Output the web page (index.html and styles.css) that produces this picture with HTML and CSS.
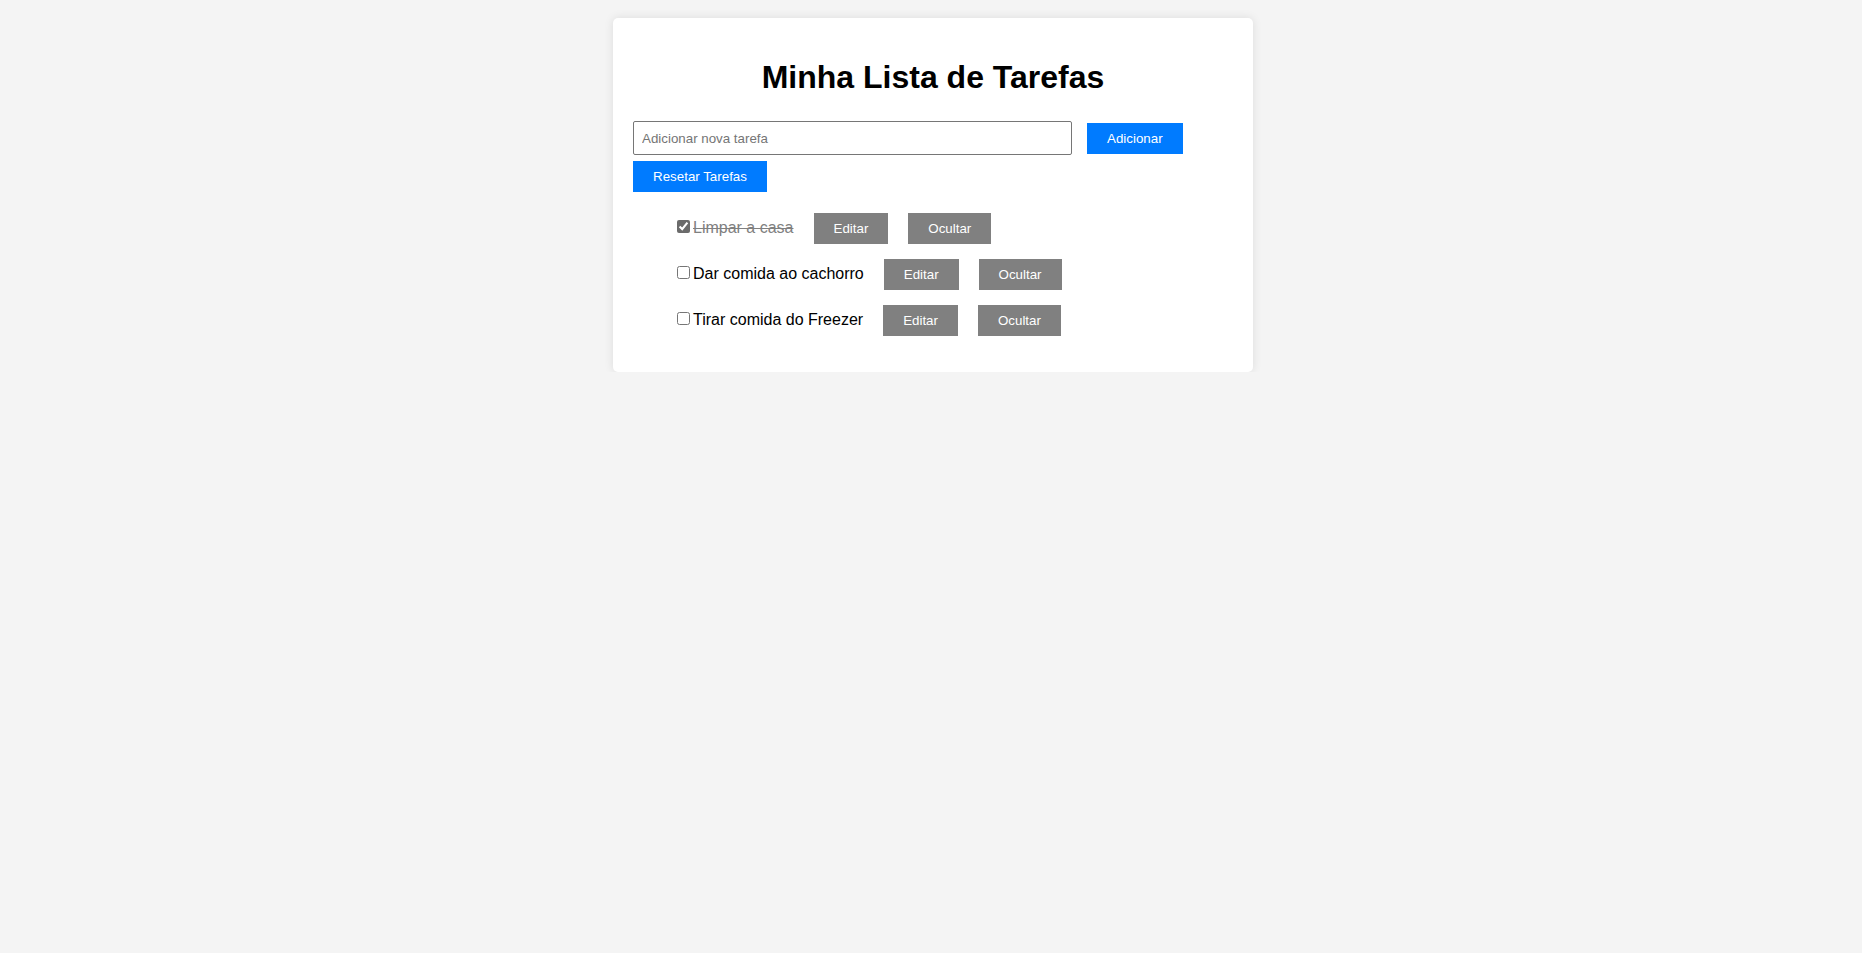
FILE: index.html
```html
<!DOCTYPE html>
<html lang="pt">
<head>
<meta charset="utf-8">
<title>Minha Lista de Tarefas</title>
<link rel="stylesheet" href="styles.css">
</head>
<body>
<div class="card">
  <h1 class="title">Minha Lista de Tarefas</h1>
  <div class="add-row">
    <input class="task-input" type="text" placeholder="Adicionar nova tarefa">
    <button class="btn btn-blue">Adicionar</button>
  </div>
  <button class="btn btn-blue reset">Resetar Tarefas</button>
  <ul class="task-list">
    <li class="task done">
      <input class="check" type="checkbox" checked>
      <span class="task-text">Limpar a casa</span>
      <button class="btn btn-gray">Editar</button>
      <button class="btn btn-gray">Ocultar</button>
    </li>
    <li class="task">
      <input class="check" type="checkbox">
      <span class="task-text">Dar comida ao cachorro</span>
      <button class="btn btn-gray">Editar</button>
      <button class="btn btn-gray">Ocultar</button>
    </li>
    <li class="task">
      <input class="check" type="checkbox">
      <span class="task-text">Tirar comida do Freezer</span>
      <button class="btn btn-gray">Editar</button>
      <button class="btn btn-gray">Ocultar</button>
    </li>
  </ul>
</div>
</body>
</html>
```
FILE: styles.css
```css
html, body {
  margin: 0;
  padding: 0;
}
body {
  background: #f4f4f4;
  font-family: "Liberation Sans", Arial, sans-serif;
  color: #000;
  padding: 18px 0 0 4px;
}
.card {
  width: 600px;
  margin: 0 auto;
  padding: 20px 20px 21px 20px;
  background: #fff;
  border-radius: 5px;
  box-shadow: 0 0 10px rgba(0, 0, 0, 0.1);
}
.title {
  font-size: 32px;
  font-weight: bold;
  line-height: 37px;
  text-align: center;
  margin: 21px 0 25px 0;
}
.add-row {
  display: flex;
  align-items: center;
}
.task-input {
  box-sizing: border-box;
  width: 439px;
  height: 34px;
  padding: 8px;
  border: 1px solid #767676;
  border-radius: 2px;
  font-family: "Liberation Sans", Arial, sans-serif;
  font-size: 13.333px;
  margin: 0 15px 0 0;
}
.task-input::placeholder {
  color: #757575;
}
.btn {
  font-family: "Liberation Sans", Arial, sans-serif;
  font-size: 13.333px;
  line-height: 15px;
  padding: 8px 20px;
  height: 31px;
  border: none;
  border-radius: 0;
  color: #fff;
  cursor: pointer;
}
.btn-blue {
  background: #007bff;
}
.btn-gray {
  background: #808080;
  margin-left: 20px;
}
.reset {
  display: block;
  margin-top: 6px;
  width: 134px;
  padding: 8px 0;
}
.task-list {
  list-style: none;
  margin: 21px 0 0 0;
  padding: 0 0 0 40px;
}
.task {
  display: flex;
  align-items: center;
  height: 31px;
  margin-bottom: 15px;
  font-size: 16px;
}
.check {
  width: 13px;
  height: 13px;
  margin: 0 3px 5px 4px;
  accent-color: #6b6b6b;
}
.task-text {
  line-height: 18px;
  margin-bottom: 2px;
}
.done .task-text {
  color: #808080;
  text-decoration: line-through;
}
```
